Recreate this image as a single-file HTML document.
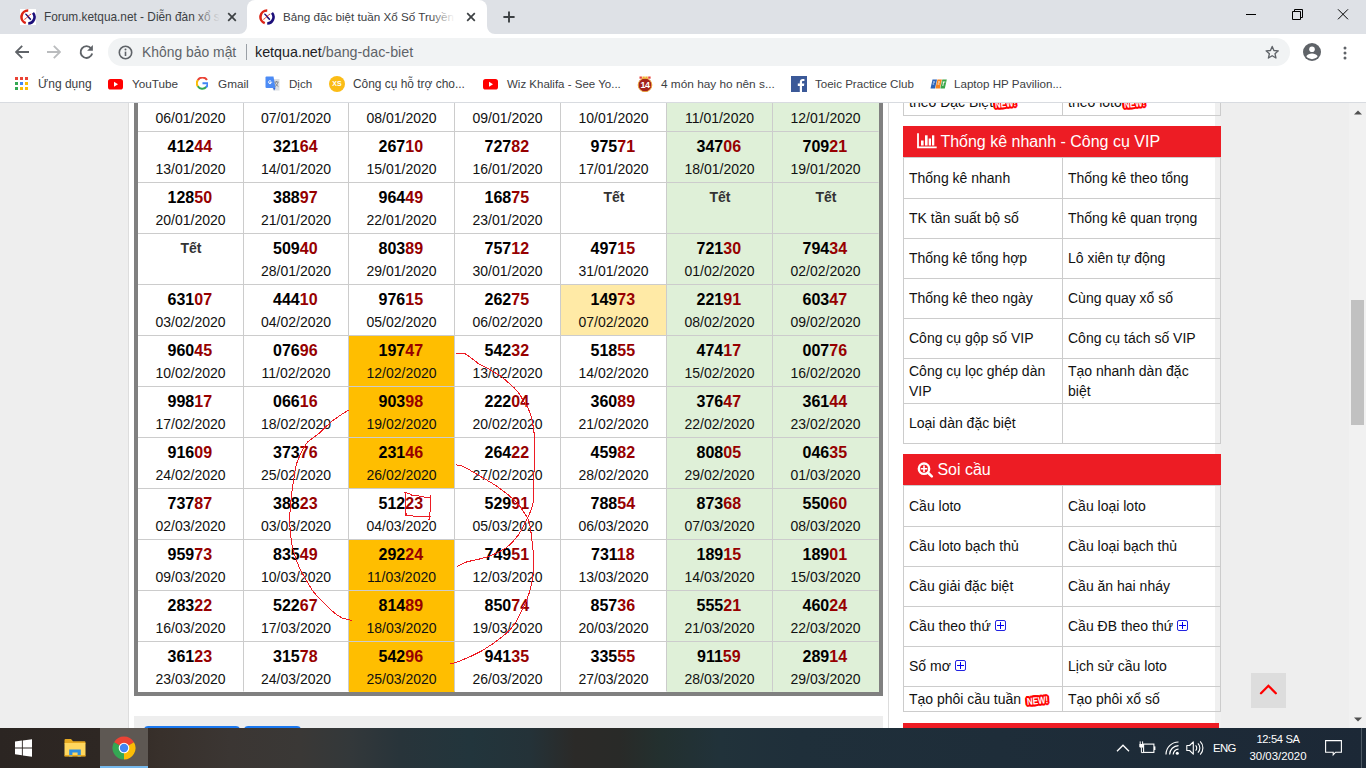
<!DOCTYPE html>
<html lang="vi">
<head>
<meta charset="utf-8">
<title>Bảng đặc biệt tuần Xổ Số Truyền Thống</title>
<style>
*{box-sizing:border-box;margin:0;padding:0}
html,body{width:1366px;height:768px;overflow:hidden;background:#eee;font-family:"Liberation Sans",sans-serif;}
body{position:relative}
.abs{position:absolute}
/* ---------- browser chrome ---------- */
#tabstrip{position:absolute;left:0;top:0;width:1366px;height:34px;background:#dee1e6}
#toolbar{position:absolute;left:0;top:34px;width:1366px;height:36px;background:#fff}
#bmbar{position:absolute;left:0;top:70px;width:1366px;height:33px;background:#fff;border-bottom:1px solid #d8dbe0}
.ui{font-family:"Liberation Sans","DejaVu Sans",sans-serif;color:#3c4043;white-space:nowrap}
.tab{position:absolute;top:0;height:34px}
.tab.act{background:#fff;border-radius:8px 8px 0 0}
.tabt{position:absolute;top:9px;font-size:11.85px;line-height:16px;color:#3c4043;overflow:hidden;white-space:nowrap}
#omni{position:absolute;left:108px;top:38px;width:1182px;height:28px;border-radius:14px;background:#f1f3f4}
.bm{position:absolute;top:76px;font-size:11.5px;line-height:16px;color:#3c4043;white-space:nowrap}

.fade{position:absolute;top:8px;width:26px;height:18px}
.tb{color:#fff;line-height:16px;white-space:nowrap;font-family:"Liberation Sans",sans-serif}
/* ---------- page ---------- */
#page{position:absolute;left:0;top:103px;width:1349px;height:625px;overflow:hidden;background:#eee}
#main{position:absolute;left:128px;top:0;width:761px;height:626px;background:#fff;border-left:1px solid #ddd;border-right:1px solid #ddd}
#side{position:absolute;left:889px;top:0;width:326px;height:626px;background:#fff}
#sidex{position:absolute;left:1215px;top:0;width:6px;height:626px;background:#f0f0f0}
#scroll{position:absolute;left:1349px;top:103px;width:17px;height:625px;background:#f1f1f1}
#thumb{position:absolute;left:2px;top:197px;width:13px;height:125px;background:#c1c1c1}
/* main table */
#dbwrap{position:absolute;left:134px;top:-22px;border-left:4px solid #808080;border-right:4px solid #808080;border-bottom:4px solid #808080}
table.db{border-collapse:separate;border-spacing:0;table-layout:fixed;width:741px}
table.db td{height:51px;border-right:1px solid #ccc;border-bottom:1px solid #ccc;text-align:center;vertical-align:top;padding:3px 0 0 0;background:#fff}
table.db td:last-child{border-right-color:transparent}
table.db tr:last-child td{border-bottom-color:transparent;height:50px}
table.db td.we{background:#dff0d8}
table.db td.ye{background:#ffeaa6}
table.db td.or{background:#ffbe00}
table.db b{display:block;font-size:16px;line-height:23px;font-weight:bold;color:#000;padding-right:1.4px}
table.db b u{text-decoration:none;color:#960000}
table.db b.tet{color:#333;font-size:14px;padding:0 0 0 1px}
table.db i{display:block;font-style:normal;font-size:14px;line-height:22px;color:#111}
/* sidebar */
.rh{position:absolute;left:903px;width:318px;height:31px;background:#ed1c24;color:#fff;font-size:16px;line-height:31px;white-space:nowrap}
table.sb{position:absolute;left:903px;width:318px;border-collapse:collapse;table-layout:fixed;font-size:14px;color:#111}
table.sb td{border:1px solid #ccc;padding:9px 6px 0 5px;line-height:20px;vertical-align:top;height:40px}
table.sb td.p2{padding-top:2px}
table.sb td:first-child{width:159px}

.nw{display:inline-block;width:25px;height:12px;position:relative;vertical-align:-3px}
.nw s{position:absolute;left:-1px;top:0;width:27px;text-align:center;text-decoration:none;color:#fff;font-weight:bold;font-size:10px;line-height:12px;transform:rotate(-5.5deg) scaleX(.8);text-shadow:1px 0 #f00,-1px 0 #f00,0 1px #f00,0 -1px #f00,1px 1px #f00,-1px -1px #f00,1px -1px #f00,-1px 1px #f00,2px 0 #f00,-2px 0 #f00,0 2px #f00,0 -2px #f00,2px 1px #f00,-2px 1px #f00,2px -1px #f00,-2px -1px #f00,1px 2px #f00,-1px 2px #f00,1px -2px #f00,-1px -2px #f00,2.5px 0 #f00,-2.5px 0 #f00}
.pl{display:inline-block;width:11px;height:11px;border:1px solid #2222e0;border-radius:2px;position:relative;vertical-align:0px}
.pl:before{content:"";position:absolute;left:1px;top:4px;width:7px;height:1px;background:#00e}
.pl:after{content:"";position:absolute;left:4px;top:1px;width:1px;height:7px;background:#00e}
#taskbar{position:absolute;left:0;top:728px;width:1366px;height:40px;background:linear-gradient(90deg,#2b2522 0px,#2e2723 100px,#38302b 160px,#3b3633 230px,#3a3836 300px,#33383a 350px,#28343a 400px,#22353c 470px,#243238 530px,#2b2a28 575px,#292a28 620px,#23302f 660px,#21323a 720px,#1f2f3a 800px,#1e2d39 1000px,#1c2836 1366px)}
</style>
</head>
<body>
<!-- ===== Chrome tab strip ===== -->
<div id="tabstrip">
  <div class="tab" style="left:8px;width:239px">
    <svg class="abs" style="left:12px;top:9px" width="16" height="16" viewBox="0 0 16 16"><rect width="16" height="16" fill="#fff"/><path d="M8.23 1.50A6.5 6.5 0 0 0 5.78 14.11" fill="none" stroke="#dc2416" stroke-width="2.6"/><path d="M12.98 3.82A6.5 6.5 0 0 1 8.23 14.50" fill="none" stroke="#1c0f7a" stroke-width="2.6"/><path d="M5.4 4.9C7.2 5.6 8.6 9.2 10.9 10.6" fill="none" stroke="#1c0f7a" stroke-width="1.5"/><path d="M4.3 10.4C6.4 10.2 8.6 5.6 11.2 5" fill="none" stroke="#dc2416" stroke-width="0.9"/></svg>
    <div class="tabt ui" style="left:36px;width:176px">Forum.ketqua.net - Diễn đàn xổ số - Soi cầu</div>
    <div class="fade" style="left:186px;background:linear-gradient(90deg,rgba(222,225,230,0),#dee1e6)"></div>
    <svg class="abs" style="left:219px;top:12px" width="10" height="10" viewBox="0 0 10 10"><path d="M1.2 1.2L8.8 8.8M8.8 1.2L1.2 8.8" stroke="#3c4043" stroke-width="1.7"/></svg>
  </div>
  <svg class="abs" style="left:239px;top:26px" width="8" height="8" viewBox="0 0 8 8"><path d="M0 8H8V0A8 8 0 0 1 0 8Z" fill="#fff"/></svg>
  <svg class="abs" style="left:487px;top:26px" width="8" height="8" viewBox="0 0 8 8"><path d="M8 8H0V0A8 8 0 0 0 8 8Z" fill="#fff"/></svg>
  <div class="tab act" style="left:247px;width:240px">
    <svg class="abs" style="left:12px;top:9px" width="16" height="16" viewBox="0 0 16 16"><rect width="16" height="16" fill="#fff"/><path d="M8.23 1.50A6.5 6.5 0 0 0 5.78 14.11" fill="none" stroke="#dc2416" stroke-width="2.6"/><path d="M12.98 3.82A6.5 6.5 0 0 1 8.23 14.50" fill="none" stroke="#1c0f7a" stroke-width="2.6"/><path d="M5.4 4.9C7.2 5.6 8.6 9.2 10.9 10.6" fill="none" stroke="#1c0f7a" stroke-width="1.5"/><path d="M4.3 10.4C6.4 10.2 8.6 5.6 11.2 5" fill="none" stroke="#dc2416" stroke-width="0.9"/></svg>
    <div class="tabt ui" style="left:36px;width:172px;font-size:11.67px">Bảng đặc biệt tuần Xổ Số Truyền Thống</div>
    <div class="fade" style="left:182px;background:linear-gradient(90deg,rgba(255,255,255,0),#fff)"></div>
    <svg class="abs" style="left:219px;top:12px" width="10" height="10" viewBox="0 0 10 10"><path d="M1.2 1.2L8.8 8.8M8.8 1.2L1.2 8.8" stroke="#3c4043" stroke-width="1.7"/></svg>
  </div>
  <svg class="abs" style="left:503px;top:11px" width="12" height="12" viewBox="0 0 12 12"><path d="M6 0.4V11.6M0.4 6H11.6" stroke="#3c4043" stroke-width="1.9"/></svg>
  <svg class="abs" style="left:1246px;top:9px" width="104" height="11" viewBox="0 0 104 11"><path d="M0 5.5H10" stroke="#000" stroke-width="1"/><path d="M46.5 2.5H54.5V10.5H46.5ZM48.5 2.5V0.5H56.5V8.5H54.5" fill="none" stroke="#000" stroke-width="1"/><path d="M92 0.3L102 10.3M102 0.3L92 10.3" stroke="#000" stroke-width="1"/></svg>
</div>
<div id="toolbar">
  <svg class="abs" style="left:15px;top:11px" width="14" height="14" viewBox="0 0 14 14"><path d="M7.2 0.8L1 7L7.2 13.2M1.2 7H14" fill="none" stroke="#5f6368" stroke-width="1.8"/></svg>
  <svg class="abs" style="left:47px;top:11px" width="14" height="14" viewBox="0 0 14 14"><path d="M6.8 0.8L13 7L6.8 13.2M12.8 7H0" fill="none" stroke="#babcbe" stroke-width="1.8"/></svg>
  <svg class="abs" style="left:79px;top:10px" width="15" height="16" viewBox="0 0 15 16"><path d="M12.1 4.3A5.9 5.9 0 1 0 13.2 9.6" fill="none" stroke="#5f6368" stroke-width="1.9"/><path d="M13.9 0.9V6.7H8.1Z" fill="#5f6368"/></svg>
  <svg class="abs" style="left:1303px;top:9px" width="18" height="18" viewBox="0 0 18 18"><circle cx="9" cy="9" r="9" fill="#5f6368"/><circle cx="9" cy="6.3" r="2.8" fill="#fff"/><path d="M3.3 13.2C4.5 11.4 6.6 10.6 9 10.6S13.5 11.4 14.7 13.2A7 7 0 0 1 3.3 13.2Z" fill="#fff"/></svg>
  <svg class="abs" style="left:1342.5px;top:11.5px" width="4" height="14" viewBox="0 0 4 14"><circle cx="2" cy="2" r="1.5" fill="#5f6368"/><circle cx="2" cy="7" r="1.5" fill="#5f6368"/><circle cx="2" cy="12" r="1.5" fill="#5f6368"/></svg>
</div>
<div id="omni">
  <svg class="abs" style="left:1157px;top:7px" width="14.4" height="14.4" viewBox="0 0 16 16"><path d="M8 1.6L9.9 6.1L14.8 6.5L11.1 9.7L12.2 14.5L8 11.9L3.8 14.5L4.9 9.7L1.2 6.5L6.1 6.1Z" fill="none" stroke="#5f6368" stroke-width="1.5" stroke-linejoin="round"/></svg>
  <svg class="abs" style="left:9.5px;top:6.5px" width="15" height="15" viewBox="0 0 15 15"><circle cx="7.5" cy="7.5" r="6.2" fill="none" stroke="#5f6368" stroke-width="1.6"/><path d="M7.5 6.6V11" stroke="#5f6368" stroke-width="1.6"/><circle cx="7.5" cy="4.5" r="1" fill="#5f6368"/></svg>
  <span class="ui abs" style="left:34px;top:6px;font-size:13.9px;line-height:16px;color:#5f6368">Không bảo mật</span>
  <span class="abs" style="left:138px;top:6px;width:1px;height:16px;background:#9aa0a6"></span>
  <span class="ui abs" style="left:147px;top:6px;font-size:14.3px;line-height:16px;color:#202124">ketqua.net<span style="color:#5f6368">/bang-dac-biet</span></span>
</div>
<div id="bmbar"></div>
<svg class="abs" style="left:15px;top:77px" width="13" height="13" viewBox="0 0 13 13"><rect x="0" y="0" width="3" height="3" fill="#ea4335"/><rect x="5" y="0" width="3" height="3" fill="#ea4335"/><rect x="10" y="0" width="3" height="3" fill="#ea4335"/><rect x="0" y="5" width="3" height="3" fill="#34a853"/><rect x="5" y="5" width="3" height="3" fill="#4285f4"/><rect x="10" y="5" width="3" height="3" fill="#fbbc05"/><rect x="0" y="10" width="3" height="3" fill="#34a853"/><rect x="5" y="10" width="3" height="3" fill="#fbbc05"/><rect x="10" y="10" width="3" height="3" fill="#fbbc05"/></svg>
<svg class="abs" style="left:108px;top:79px" width="15" height="11" viewBox="0 0 15 11"><rect width="15" height="10.5" rx="2.6" fill="#f00"/><path d="M6 2.8L10 5.25L6 7.7Z" fill="#fff"/></svg>
<svg class="abs" style="left:195.6px;top:77.4px" width="12.6" height="12.6" viewBox="0 0 14 14"><path d="M12.2 3.3A6 6 0 0 0 2 3.6" fill="none" stroke="#ea4335" stroke-width="2.3"/><path d="M2.1 3.4A6 6 0 0 0 2.1 10.4" fill="none" stroke="#fbbc05" stroke-width="2.3"/><path d="M2 10.2A6 6 0 0 0 11.4 11.2" fill="none" stroke="#34a853" stroke-width="2.3"/><path d="M11.2 11.4A6 6 0 0 0 13 7H7.2" fill="none" stroke="#4285f4" stroke-width="2.3"/></svg>
<svg class="abs" style="left:265px;top:76px" width="16" height="16" viewBox="0 0 16 16"><path d="M6 3H14.5V14.5H8Z" fill="#dcdfe3"/><path d="M0.5 1.5Q0.5 0.5 1.5 0.5H8.5L10.5 12H1.5Q0.5 12 0.5 11Z" fill="#4c8bf5"/><path d="M8 12L10.5 12L9.2 14.6Z" fill="#3367d6"/><path d="M9.5 6H13.5M11.5 5V6M10 6.2C10.6 8.2 11.8 9.6 13.4 10.6M13 6.2C12.4 8.4 11.2 9.8 9.8 10.8" fill="none" stroke="#7a7f87" stroke-width="0.9"/><path d="M7.2 6.2H5V7.2H6.1A1.5 1.5 0 1 1 5.9 5" fill="none" stroke="#fff" stroke-width="0.9"/></svg>
<span class="abs" style="left:329px;top:76px;width:16px;height:16px;border-radius:8px;background:#fbbc16;color:#fff;font-size:7px;line-height:16px;font-weight:bold;text-align:center;font-family:'Liberation Sans',sans-serif">XS</span>
<svg class="abs" style="left:483px;top:79px" width="15" height="11" viewBox="0 0 15 11"><rect width="15" height="10.5" rx="2.6" fill="#f00"/><path d="M6 2.8L10 5.25L6 7.7Z" fill="#fff"/></svg>
<span class="abs" style="left:637px;top:76px;width:16px;height:16px"><svg class="abs" style="left:0;top:0" width="16" height="16" viewBox="0 0 16 16"><circle cx="8" cy="9" r="6.8" fill="#a3211d" stroke="#e9a23b" stroke-width="1"/><rect x="2.5" y="0.5" width="2.4" height="2.2" fill="#e8423a"/><rect x="5.4" y="0.5" width="2.4" height="2.2" fill="#f2b233"/><rect x="8.3" y="0.5" width="2.4" height="2.2" fill="#f2b233"/><rect x="11.2" y="0.5" width="2.4" height="2.2" fill="#e8423a"/></svg><span class="abs" style="left:0;top:4px;width:16px;text-align:center;color:#fff;font-weight:bold;font-size:9px;line-height:10px;letter-spacing:-0.5px">14</span></span>
<svg class="abs" style="left:791px;top:76px" width="16" height="16" viewBox="0 0 16 16"><rect width="16" height="16" fill="#3b5998"/><path d="M11 16V10H13L13.3 7.6H11V6.2C11 5.5 11.2 5.1 12.2 5.1H13.4V3C13.2 3 12.5 2.9 11.7 2.9C10 2.9 8.8 4 8.8 5.9V7.6H6.8V10H8.8V16Z" fill="#fff"/></svg>
<svg class="abs" style="left:930px;top:79px" width="17" height="10" viewBox="0 0 17 10"><path d="M2.5 0.5H7L5 9.5H0.5Z" fill="#2a62b8"/><path d="M7.4 0.5H11.9L9.9 9.5H5.4Z" fill="#f58220"/><path d="M12.3 0.5H16.8L14.8 9.5H10.3Z" fill="#3aa648"/><path d="M3 3H5M2.6 5H4.2M8 3H10M7.6 5H9.4M12.6 3H15.4M13.6 3L12.8 7" stroke="#fff" stroke-width="0.9" fill="none"/></svg>
<span class="bm" style="left:38px;font-size:12.0px">Ứng dụng</span>
<span class="bm" style="left:132px;font-size:11.73px">YouTube</span>
<span class="bm" style="left:218px;font-size:11.75px">Gmail</span>
<span class="bm" style="left:289px;font-size:11.6px">Dịch</span>
<span class="bm" style="left:353px;font-size:11.93px">Công cụ hỗ trợ cho...</span>
<span class="bm" style="left:507px;font-size:11.5px">Wiz Khalifa - See Yo...</span>
<span class="bm" style="left:661px;font-size:11.83px">4 món hay ho nên s...</span>
<span class="bm" style="left:815px;font-size:11.55px">Toeic Practice Club</span>
<span class="bm" style="left:954px;font-size:11.6px">Laptop HP Pavilion...</span>

<!-- ===== Web page ===== -->
<div id="page">
  <div id="main"></div>
  <div id="side"></div>
  <div id="sidex"></div>
  <div id="dbwrap">
<table class="db"><colgroup><col style="width:106px"><col style="width:105px"><col style="width:106px"><col style="width:106px"><col style="width:106px"><col style="width:106px"><col style="width:106px"></colgroup>
<tr>
<td><b>&nbsp;</b><i>06/01/2020</i></td>
<td><b>&nbsp;</b><i>07/01/2020</i></td>
<td><b>&nbsp;</b><i>08/01/2020</i></td>
<td><b>&nbsp;</b><i>09/01/2020</i></td>
<td><b>&nbsp;</b><i>10/01/2020</i></td>
<td class="we"><b>&nbsp;</b><i>11/01/2020</i></td>
<td class="we"><b>&nbsp;</b><i>12/01/2020</i></td>
</tr>
<tr>
<td><b>412<u>44</u></b><i>13/01/2020</i></td>
<td><b>321<u>64</u></b><i>14/01/2020</i></td>
<td><b>267<u>10</u></b><i>15/01/2020</i></td>
<td><b>727<u>82</u></b><i>16/01/2020</i></td>
<td><b>975<u>71</u></b><i>17/01/2020</i></td>
<td class="we"><b>347<u>06</u></b><i>18/01/2020</i></td>
<td class="we"><b>709<u>21</u></b><i>19/01/2020</i></td>
</tr>
<tr>
<td><b>128<u>50</u></b><i>20/01/2020</i></td>
<td><b>388<u>97</u></b><i>21/01/2020</i></td>
<td><b>964<u>49</u></b><i>22/01/2020</i></td>
<td><b>168<u>75</u></b><i>23/01/2020</i></td>
<td><b class="tet">Tết</b><i>&nbsp;</i></td>
<td class="we"><b class="tet">Tết</b><i>&nbsp;</i></td>
<td class="we"><b class="tet">Tết</b><i>&nbsp;</i></td>
</tr>
<tr>
<td><b class="tet">Tết</b><i>&nbsp;</i></td>
<td><b>509<u>40</u></b><i>28/01/2020</i></td>
<td><b>803<u>89</u></b><i>29/01/2020</i></td>
<td><b>757<u>12</u></b><i>30/01/2020</i></td>
<td><b>497<u>15</u></b><i>31/01/2020</i></td>
<td class="we"><b>721<u>30</u></b><i>01/02/2020</i></td>
<td class="we"><b>794<u>34</u></b><i>02/02/2020</i></td>
</tr>
<tr>
<td><b>631<u>07</u></b><i>03/02/2020</i></td>
<td><b>444<u>10</u></b><i>04/02/2020</i></td>
<td><b>976<u>15</u></b><i>05/02/2020</i></td>
<td><b>262<u>75</u></b><i>06/02/2020</i></td>
<td class="ye"><b>149<u>73</u></b><i>07/02/2020</i></td>
<td class="we"><b>221<u>91</u></b><i>08/02/2020</i></td>
<td class="we"><b>603<u>47</u></b><i>09/02/2020</i></td>
</tr>
<tr>
<td><b>960<u>45</u></b><i>10/02/2020</i></td>
<td><b>076<u>96</u></b><i>11/02/2020</i></td>
<td class="or"><b>197<u>47</u></b><i>12/02/2020</i></td>
<td><b>542<u>32</u></b><i>13/02/2020</i></td>
<td><b>518<u>55</u></b><i>14/02/2020</i></td>
<td class="we"><b>474<u>17</u></b><i>15/02/2020</i></td>
<td class="we"><b>007<u>76</u></b><i>16/02/2020</i></td>
</tr>
<tr>
<td><b>998<u>17</u></b><i>17/02/2020</i></td>
<td><b>066<u>16</u></b><i>18/02/2020</i></td>
<td class="or"><b>903<u>98</u></b><i>19/02/2020</i></td>
<td><b>222<u>04</u></b><i>20/02/2020</i></td>
<td><b>360<u>89</u></b><i>21/02/2020</i></td>
<td class="we"><b>376<u>47</u></b><i>22/02/2020</i></td>
<td class="we"><b>361<u>44</u></b><i>23/02/2020</i></td>
</tr>
<tr>
<td><b>916<u>09</u></b><i>24/02/2020</i></td>
<td><b>373<u>76</u></b><i>25/02/2020</i></td>
<td class="or"><b>231<u>46</u></b><i>26/02/2020</i></td>
<td><b>264<u>22</u></b><i>27/02/2020</i></td>
<td><b>459<u>82</u></b><i>28/02/2020</i></td>
<td class="we"><b>808<u>05</u></b><i>29/02/2020</i></td>
<td class="we"><b>046<u>35</u></b><i>01/03/2020</i></td>
</tr>
<tr>
<td><b>737<u>87</u></b><i>02/03/2020</i></td>
<td><b>388<u>23</u></b><i>03/03/2020</i></td>
<td><b>512<u>23</u></b><i>04/03/2020</i></td>
<td><b>529<u>91</u></b><i>05/03/2020</i></td>
<td><b>788<u>54</u></b><i>06/03/2020</i></td>
<td class="we"><b>873<u>68</u></b><i>07/03/2020</i></td>
<td class="we"><b>550<u>60</u></b><i>08/03/2020</i></td>
</tr>
<tr>
<td><b>959<u>73</u></b><i>09/03/2020</i></td>
<td><b>835<u>49</u></b><i>10/03/2020</i></td>
<td class="or"><b>292<u>24</u></b><i>11/03/2020</i></td>
<td><b>749<u>51</u></b><i>12/03/2020</i></td>
<td><b>731<u>18</u></b><i>13/03/2020</i></td>
<td class="we"><b>189<u>15</u></b><i>14/03/2020</i></td>
<td class="we"><b>189<u>01</u></b><i>15/03/2020</i></td>
</tr>
<tr>
<td><b>283<u>22</u></b><i>16/03/2020</i></td>
<td><b>522<u>67</u></b><i>17/03/2020</i></td>
<td class="or"><b>814<u>89</u></b><i>18/03/2020</i></td>
<td><b>850<u>74</u></b><i>19/03/2020</i></td>
<td><b>857<u>36</u></b><i>20/03/2020</i></td>
<td class="we"><b>555<u>21</u></b><i>21/03/2020</i></td>
<td class="we"><b>460<u>24</u></b><i>22/03/2020</i></td>
</tr>
<tr>
<td><b>361<u>23</u></b><i>23/03/2020</i></td>
<td><b>315<u>78</u></b><i>24/03/2020</i></td>
<td class="or"><b>542<u>96</u></b><i>25/03/2020</i></td>
<td><b>941<u>35</u></b><i>26/03/2020</i></td>
<td><b>335<u>55</u></b><i>27/03/2020</i></td>
<td class="we"><b>911<u>59</u></b><i>28/03/2020</i></td>
<td class="we"><b>289<u>14</u></b><i>29/03/2020</i></td>
</tr>
</table>
  </div>

  <table class="sb" style="top:-34px">
    <tr><td class="p2" style="height:46px">Tạo phôi cầu<br>theo Đặc Biệt<span class="nw"><s>NEW!</s></span></td><td class="p2" style="height:46px">Tạo phôi cầu<br>theo loto<span class="nw"><s>NEW!</s></span></td></tr>
  </table>
  <div class="rh" style="top:23px"><svg class="abs" style="left:14px;top:7px" width="20" height="16" viewBox="0 0 20 16"><path d="M1 0.3V14.4H19.7" fill="none" stroke="#fff" stroke-width="1.8"/><rect x="4" y="7.5" width="2.6" height="5" fill="#fff"/><rect x="8" y="2.3" width="2.6" height="10.2" fill="#fff"/><rect x="11.7" y="5.5" width="2.3" height="7" fill="#fff"/><rect x="15" y="2.3" width="2.3" height="10.2" fill="#fff"/></svg><span class="abs" style="left:37.4px;top:0">Thống kê nhanh - Công cụ VIP</span></div>
  <table class="sb" style="top:54px">
    <tr><td style="height:41px;padding-top:10px">Thống kê nhanh</td><td style="height:41px;padding-top:10px">Thống kê theo tổng</td></tr>
    <tr><td>TK tần suất bộ số</td><td>Thống kê quan trọng</td></tr>
    <tr><td>Thống kê tổng hợp</td><td>Lô xiên tự động</td></tr>
    <tr><td>Thống kê theo ngày</td><td>Cùng quay xổ số</td></tr>
    <tr><td>Công cụ gộp số VIP</td><td>Công cụ tách số VIP</td></tr>
    <tr><td class="p2" style="height:45px">Công cụ lọc ghép dàn VIP</td><td class="p2" style="height:45px">Tạo nhanh dàn đặc biệt</td></tr>
    <tr><td>Loại dàn đặc biệt</td><td></td></tr>
  </table>
  <div class="rh" style="top:351px"><svg class="abs" style="left:13px;top:7px" width="20" height="18" viewBox="0 0 20 18"><circle cx="8" cy="7.7" r="5.2" fill="none" stroke="#fff" stroke-width="2.4"/><path d="M12 11.8L15.8 15.4" stroke="#fff" stroke-width="2.6" stroke-linecap="round"/><path d="M8 4.4V11M4.7 7.7H11.3" stroke="#fff" stroke-width="1.6"/></svg><span class="abs" style="left:34.4px;top:0">Soi cầu</span></div>
  <table class="sb" style="top:382px">
    <tr><td style="height:41px;padding-top:10px">Cầu loto</td><td style="height:41px;padding-top:10px">Cầu loại loto</td></tr>
    <tr><td>Cầu loto bạch thủ</td><td>Cầu loại bạch thủ</td></tr>
    <tr><td>Cầu giải đặc biệt</td><td>Cầu ăn hai nháy</td></tr>
    <tr><td>Cầu theo thứ <span class="pl"></span></td><td>Cầu ĐB theo thứ <span class="pl"></span></td></tr>
    <tr><td>Số mơ <span class="pl"></span></td><td>Lịch sử cầu loto</td></tr>
    <tr><td class="p2" style="height:25px">Tạo phôi cầu tuần <span class="nw"><s>NEW!</s></span></td><td class="p2" style="height:25px">Tạo phôi xổ số</td></tr>
  </table>
  <div class="rh" style="top:620px;width:316px"></div>
  <div class="abs" style="left:134px;top:613px;width:749px;height:20px;background:#eee"></div>
  <div class="abs" style="left:144px;top:623px;width:96px;height:10px;background:#1a78f0;border-radius:4px 4px 0 0"></div>
  <div class="abs" style="left:244px;top:623px;width:57px;height:10px;background:#1a78f0;border-radius:4px 4px 0 0"></div>
  <svg class="abs" style="left:0;top:0" width="1349" height="625" viewBox="0 103 1349 625" fill="none" stroke="#ed1c24" stroke-width="1" shape-rendering="crispEdges">
    <polyline points="348.4,410.2 340.2,415.3 333.1,420.3 326.9,425.8 319.8,432.8 313.6,437.5 307.3,442.2 303.4,448.4 299.5,456.3 296.4,464.1 294.8,471.9 293.8,479.7 292.5,487.5 291.3,496.9 290.2,507.8 289.6,519.5 290.2,530.3 291.3,541.3 293.3,550.6 296.4,560.0 298.8,566.3 302.7,574.1 307.3,581.9 312.0,589.7 316.7,595.9 323.0,602.2 329.2,608.4 335.5,613.9 341.7,617.8 347.2,619.4 351.6,620.5"/>
    <polyline points="456.3,353.5 464.8,353.5 470.3,357.2 478.1,363.4 485.9,367.3 493.8,372.0 501.6,376.7 507.8,382.2 514.1,387.7 519.5,393.9 523.4,400.9 528.1,408.0 531.3,416.6 533.1,425.9 534.4,435.3 534.5,447.8 534.5,462.5 533.9,475.0 533.6,487.5 533.3,501.6 531.3,509.4 528.1,517.2 523.4,526.6 518.8,534.4 512.5,542.2 506.3,547.7 498.4,552.3 489.1,556.3 478.1,559.4 467.2,561.7 457.0,566.4"/>
    <polyline points="455.5,464.8 460.9,465.6 468.8,469.5 478.1,475.0 487.5,480.5 495.3,485.2 501.6,489.8 507.8,494.5 514.1,500.0 520.3,507.0 525.0,514.1 528.1,518.8 530.5,528.1 531.6,537.5 532.8,546.9 533.6,557.8 533.6,569.4 532.2,580.3 529.8,591.3 525.9,602.2 521.3,611.6 516.6,620.9 510.3,629.5 502.5,636.6 493.1,643.6 482.2,650.6 471.3,656.1 460.3,660.8 454.1,663.1 450.2,663.4"/>
    <polyline points="404.5,492.5 409.7,493.5 411.3,495 416.7,495.5 422.6,496.8 426.9,497.5 430.8,497.5"/>
    <polyline points="405.2,492 405.2,515.5 412.8,515.5 413.6,516.5 430.8,516.5"/>
    <polyline points="430.5,495.2 430.5,511.3 429.5,512.8 429.5,519 428.5,520.2"/>
    <polyline points="406.5,513.2 406.5,515"/>
  </svg>
  <div class="abs" style="left:1251px;top:570px;width:35px;height:35px;background:#ddd"><svg width="35" height="35" viewBox="0 0 35 35"><path d="M10 20.3L17.4 12.8L24.8 20.3" fill="none" stroke="#f00" stroke-width="2.3" stroke-linecap="round"/></svg></div>

</div>
<div id="scroll"><div id="thumb"></div><svg class="abs" style="left:5px;top:7px" width="8" height="5" viewBox="0 0 8 5"><path d="M0 4.5L4 0.5L8 4.5Z" fill="#505050"/></svg><svg class="abs" style="left:5px;top:614px" width="8" height="5" viewBox="0 0 8 5"><path d="M0 0.5L4 4.5L8 0.5Z" fill="#505050"/></svg></div>
<div id="taskbar">
  <svg class="abs" style="left:15px;top:11px" width="17" height="18" viewBox="0 0 17 18"><path d="M0 2.6L6.9 1.6V8.4H0ZM7.8 1.5L17 0.2V8.4H7.8ZM0 9.4H6.9V16.3L0 15.3ZM7.8 9.4H17V17.7L7.8 16.4Z" fill="#fff"/></svg>
  <svg class="abs" style="left:64px;top:10px" width="22" height="20" viewBox="0 0 22 20"><path d="M0.5 2.2Q0.5 1 1.6 1H7L9 3.2H20.4Q21.5 3.2 21.5 4.3V6H0.5Z" fill="#e6a920"/><rect x="0.5" y="5" width="21" height="13" rx="0.8" fill="#ffd75e"/><path d="M5.2 11.5H16.8V19H13.6V14.6H8.4V19H5.2Z" fill="#2f8fe0"/><rect x="0.5" y="17" width="21" height="1.6" fill="#e6a920"/></svg>
  <div class="abs" style="left:100px;top:0;width:48px;height:40px;background:#5e5853"></div>
  <div class="abs" style="left:100px;top:38px;width:48px;height:2px;background:#76b9ed"></div>
  <svg class="abs" style="left:112px;top:8px" width="24" height="24" viewBox="0 0 24 24"><path d="M12 12L2.04 6.25A11.5 11.5 0 0 1 21.96 6.25Z" fill="#ea4335"/><path d="M12 12L21.96 6.25A11.5 11.5 0 0 1 12 23.5Z" fill="#fbbc05"/><path d="M12 12L12 23.5A11.5 11.5 0 0 1 2.04 6.25Z" fill="#34a853"/><path d="M12 6.8H21.6" stroke="#ea4335" stroke-width="0.1"/><circle cx="12" cy="12" r="5.3" fill="#fff"/><circle cx="12" cy="12" r="4.2" fill="#4285f4"/></svg>
  <svg class="abs" style="left:1116px;top:16px" width="14" height="8" viewBox="0 0 14 8"><path d="M1 7.2L7 1.2L13 7.2" fill="none" stroke="#fff" stroke-width="1.3"/></svg>
  <svg class="abs" style="left:1139px;top:13px" width="17" height="13" viewBox="0 0 17 13"><rect x="4.6" y="3.1" width="10.3" height="8.3" fill="none" stroke="#fff" stroke-width="1.1"/><rect x="15" y="5.4" width="1.4" height="3.6" fill="#fff"/><path d="M1.2 0.4V3M3.6 0.4V3" stroke="#fff" stroke-width="1"/><path d="M0.3 3H4.5V5.2Q4.5 6.8 2.4 6.8Q0.3 6.8 0.3 5.2Z" fill="#fff"/><path d="M2.4 6.5V11.6H4.6" fill="none" stroke="#fff" stroke-width="1"/></svg>
  <svg class="abs" style="left:1165px;top:13px" width="15" height="15" viewBox="0 0 15 15"><path d="M1 13.5A12.5 12.5 0 0 1 13.5 1" fill="none" stroke="#fff" stroke-width="1.2"/><path d="M4.6 13.5A9 9 0 0 1 13.5 4.6" fill="none" stroke="#fff" stroke-width="1.2"/><path d="M8.2 13.5A5.4 5.4 0 0 1 13.5 8.2" fill="none" stroke="#fff" stroke-width="1.2"/><circle cx="12.3" cy="12.3" r="1.5" fill="#fff"/></svg>
  <svg class="abs" style="left:1186px;top:12px" width="18" height="16" viewBox="0 0 18 16"><path d="M0.8 5.5H3.6L7.3 1.8V14.2L3.6 10.5H0.8Z" fill="none" stroke="#fff" stroke-width="1.1" stroke-linejoin="round"/><path d="M9.6 5.4A3.6 3.6 0 0 1 9.6 10.6M11.9 3.3A6.6 6.6 0 0 1 11.9 12.7M14.2 1.4A9.4 9.4 0 0 1 14.2 14.6" fill="none" stroke="#fff" stroke-width="1.1"/></svg>
  <span class="abs tb" style="left:1213px;top:12px;font-size:11.4px;letter-spacing:-0.7px">ENG</span>
  <span class="abs tb" style="left:1228px;top:3px;width:100px;text-align:center;font-size:11.2px;letter-spacing:-0.35px">12:54 SA</span>
  <span class="abs tb" style="left:1228px;top:20px;width:100px;text-align:center;font-size:11.4px">30/03/2020</span>
  <svg class="abs" style="left:1325px;top:12px" width="17" height="17" viewBox="0 0 17 17"><path d="M0.6 0.6H16.4V12.2H10.6L8.2 14.8V12.2H0.6Z" fill="none" stroke="#fff" stroke-width="1.1" stroke-linejoin="miter"/></svg>
  <div class="abs" style="left:1361px;top:0;width:1px;height:40px;background:#4d5964"></div>
</div>
</body>
</html>
